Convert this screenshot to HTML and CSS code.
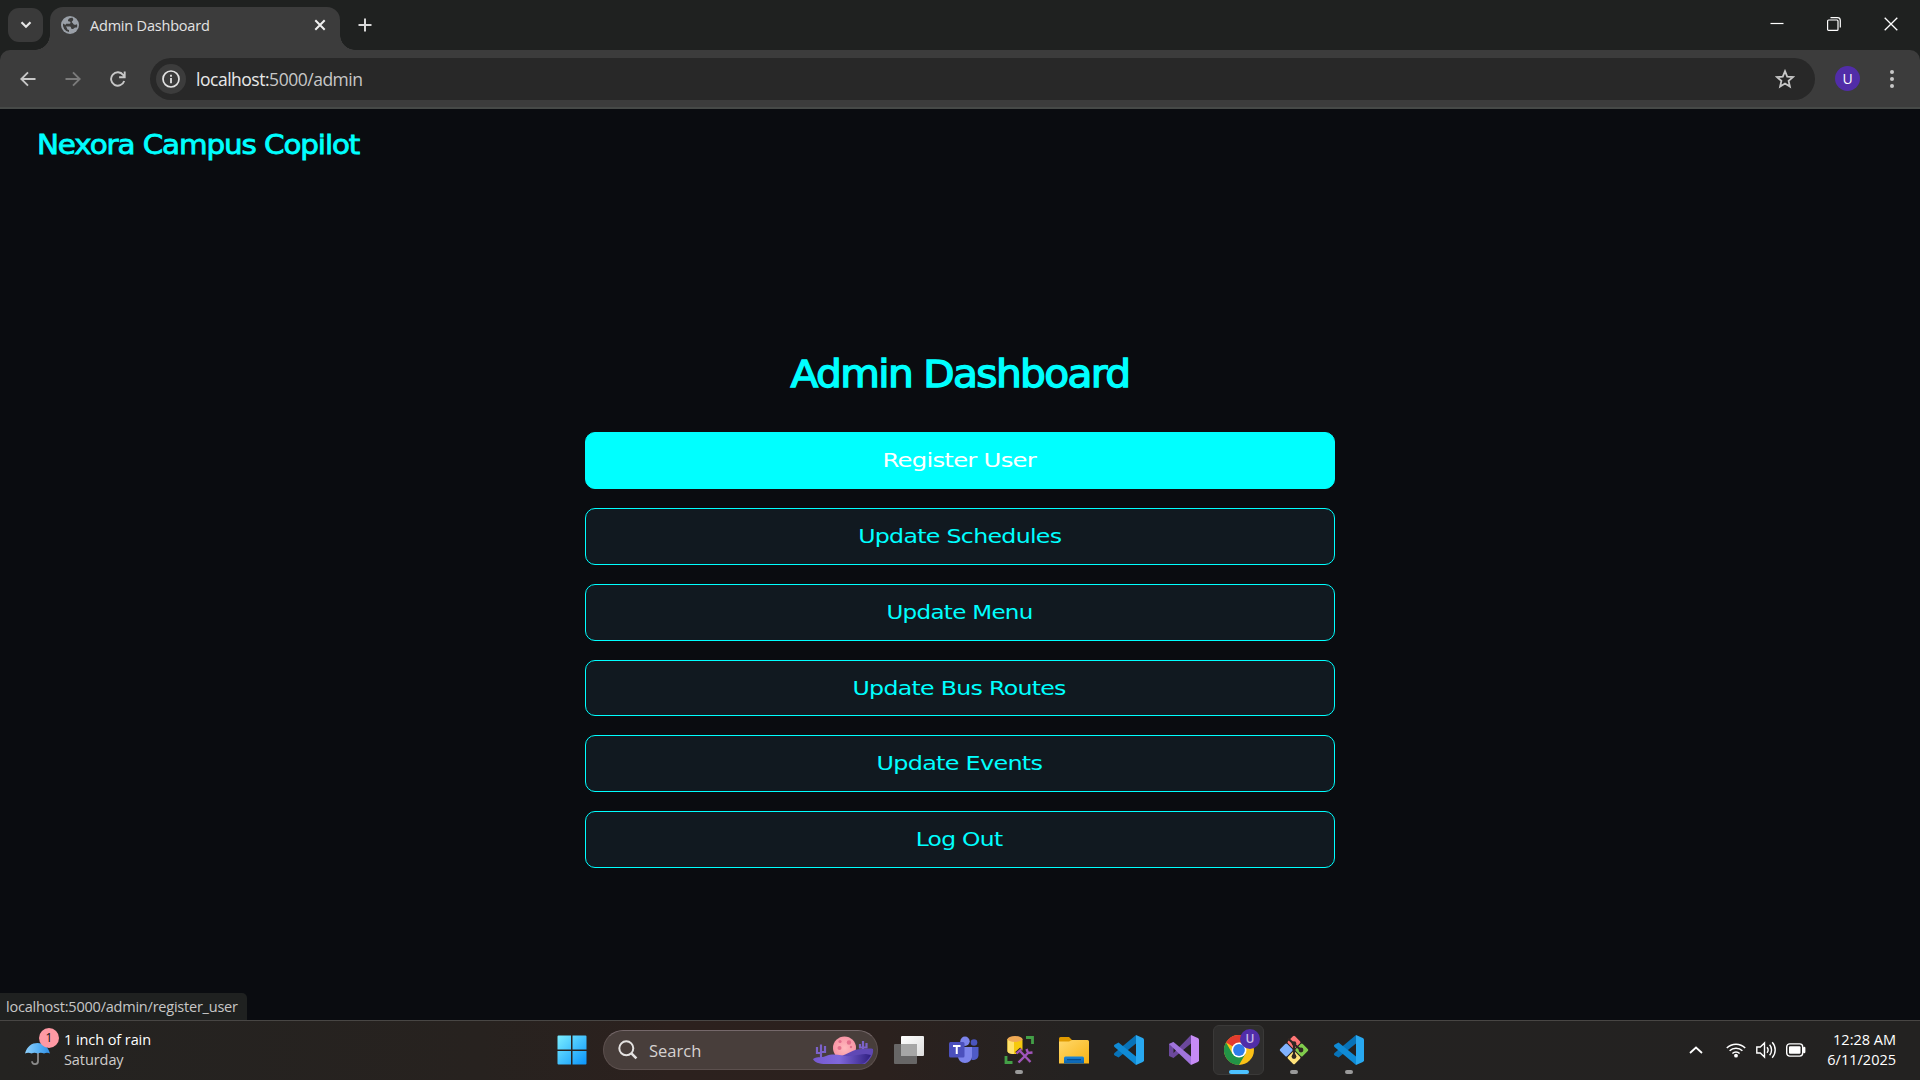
FILE: index.html
```html
<!DOCTYPE html>
<html lang="en">
<head>
<meta charset="utf-8">
<title>Admin Dashboard</title>
<link rel="stylesheet" href="styles.css">
</head>
<body>
<div class="screen">
  <div class="tabstrip">
    <button class="tab-search"><svg width="12" height="8" viewBox="0 0 12 8"><path d="M1.500 1.200 6 5.700 10.500 1.200" fill="none" stroke="#e6e6e6" stroke-width="2.200"/></svg></button>
    <div class="tab">
      <svg width="18" height="18" viewBox="0 0 18 18"><circle cx="9" cy="9" r="9" fill="#9aa0a8"/><path d="M11.500 1.800C9.500 1.600 8 2.500 7.300 3.500c-.6 1-.2 2 .8 2 .9 0 1.400.3 1.400 1.200 0 .8-.6 1.100-1.500 1.100H5.800c-.8 0-1.200.5-1.200 1.200L2 7.500A7.200 7.200 0 0 0 8 16v-2c-1.500 0-2-1-2-2l-1.200-1.500H8c1.500 0 2 .4 2 1.200s.7 1.300 1.700 1.300c1.300 0 1.300-1.500 2.800-1.500H16A7.200 7.200 0 0 0 16 8c-.8.9-2 1.100-3 .6-.9-.5-.7-1.500-1.600-1.900-.8-.4-.8-1.400 0-1.800.9-.5 1.300-1.200.1-3.100z" fill="#3c3c3c" fill-rule="evenodd"/></svg>
      <span class="tab-title">Admin Dashboard</span>
      <svg class="tab-close" width="12" height="12" viewBox="0 0 12 12"><path d="m1.300 1.300 9.400 9.400m0-9.400-9.400 9.400" stroke="#f0f0f0" stroke-width="2"/></svg>
    </div>
    <svg class="new-tab" width="14" height="14" viewBox="0 0 14 14"><path d="M7 .5v13M.5 7h13" stroke="#d8d8d8" stroke-width="2"/></svg>
    <div class="window-controls">
      <svg width="14" height="14" viewBox="0 0 14 14"><path d="M.5 6.500h13" stroke="#fff" stroke-width="1.200"/></svg>
      <svg width="14" height="14" viewBox="0 0 14 14"><rect x=".6" y="3" width="10.400" height="10.400" rx="1" fill="none" stroke="#fff" stroke-width="1.200"/><path d="M3.500.7h7a2.800 2.800 0 0 1 2.800 2.800v7" fill="none" stroke="#fff" stroke-width="1.200"/></svg>
      <svg width="14" height="14" viewBox="0 0 14 14"><path d="m.7.7 12.600 12.600m0-12.600L.7 13.300" stroke="#fff" stroke-width="1.300"/></svg>
    </div>
  </div>

  <div class="toolbar">
    <div class="nav">
      <svg width="16" height="16" viewBox="0 0 16 16"><path d="M15.500 8H1.700M8 1.300 1.300 8 8 14.700" fill="none" stroke="#c7c7c7" stroke-width="1.900"/></svg>
      <svg width="16" height="16" viewBox="0 0 16 16"><path d="M.5 8h13.800M8 1.300 14.700 8 8 14.700" fill="none" stroke="#7b7b7b" stroke-width="1.900"/></svg>
      <svg width="16" height="16" viewBox="0 0 16 16"><path d="M14.200 10A6.700 6.700 0 1 1 13.200 4l1.300 1.800M14.700.6v5.600H9.100" fill="none" stroke="#c7c7c7" stroke-width="1.900"/></svg>
    </div>
    <div class="omnibox">
      <span class="site-info"><svg width="18" height="18" viewBox="0 0 18 18"><circle cx="9" cy="9" r="8" fill="none" stroke="#e3e3e3" stroke-width="1.700"/><path d="M9 8v5.200M9 4.800v1.900" stroke="#e3e3e3" stroke-width="1.800"/></svg></span>
      <span class="url"><b>localhost:</b>5000/admin</span>
      <svg class="star" width="20" height="20" viewBox="0 0 20 20"><path d="m10 2.200 2.200 5.400 5.800.5-4.400 3.800 1.300 5.700-4.900-3-4.900 3 1.300-5.700L2 8.100l5.800-.5z" fill="none" stroke="#c7c7c7" stroke-width="1.800"/></svg>
    </div>
    <span class="avatar">U</span>
    <svg class="menu-dots" width="4" height="18" viewBox="0 0 4 18"><g fill="#c7c7c7"><circle cx="2" cy="2.100" r="2"/><circle cx="2" cy="9" r="2"/><circle cx="2" cy="15.900" r="2"/></g></svg>
  </div>

  <div class="page">
    <header class="brand"><span class="stretch" style="--sx:1.087">Nexora Campus Copilot</span></header>
    <main class="dashboard">
      <h1 class="heading"><span class="stretch" style="--sx:1.1">Admin Dashboard</span></h1>
      <nav class="actions">
        <a class="action action-hover"><span class="stretch" style="--sx:1.215">Register User</span></a>
        <a class="action"><span class="stretch" style="--sx:1.185">Update Schedules</span></a>
        <a class="action"><span class="stretch" style="--sx:1.15">Update Menu</span></a>
        <a class="action"><span class="stretch" style="--sx:1.183">Update Bus Routes</span></a>
        <a class="action"><span class="stretch" style="--sx:1.195">Update Events</span></a>
        <a class="action"><span class="stretch" style="--sx:1.17">Log Out</span></a>
      </nav>
    </main>
    <div class="status">localhost:5000/admin/register_user</div>
  </div>

  <footer class="taskbar">
    <div class="weather">
      <div class="umbrella">
        <svg width="26" height="26" viewBox="0 0 26 26"><defs><linearGradient id="um"><stop offset="0" stop-color="#8fd0fb"/><stop offset=".5" stop-color="#5db4f5"/><stop offset="1" stop-color="#2f8fe6"/></linearGradient></defs><path d="M13 12v9a3 3 0 0 1-6 .3" fill="none" stroke="#8a8a8a" stroke-width="1.800"/><path d="M0 13.500C2 6 7 3 12.500 3S23 6 25 13.500c-2-.9-4-.9-6 0-2-.9-4.500-.9-6.500 0-2-.9-4-.9-6 0-2-.9-4.500-.9-6.500 0z" fill="url(#um)"/></svg>
        <span class="weather-badge">1</span>
      </div>
      <div class="weather-text"><span>1 inch of rain</span><span class="dim">Saturday</span></div>
    </div>

    <div class="apps">
      <div class="app app-start"><svg width="30" height="30" viewBox="0 0 30 30"><defs><linearGradient id="wi" x2="1" y2="1"><stop offset="0" stop-color="#7beeff"/><stop offset="1" stop-color="#0a94fb"/></linearGradient></defs><path d="M1.500.5H14v14H.5v-13a1 1 0 0 1 1-1zM15.500.5h13a1 1 0 0 1 1 1v13h-14zM.5 16H14v13.500H1.500a1 1 0 0 1-1-1zM15.500 16h14v12.500a1 1 0 0 1-1 1h-13z" fill="url(#wi)"/></svg></div>
      <div class="search">
        <svg width="20" height="20" viewBox="0 0 20 20"><circle cx="8.300" cy="8.300" r="7" fill="none" stroke="#e4e2e1" stroke-width="2"/><path d="m13.400 13.400 5 5" stroke="#e4e2e1" stroke-width="2.600"/></svg>
        <span>Search</span>
        <svg class="scene" width="62" height="30" viewBox="0 0 62 30"><defs><linearGradient id="hill"><stop offset="0" stop-color="#7659cf"/><stop offset=".45" stop-color="#8068dc"/><stop offset="1" stop-color="#2f1f80"/></linearGradient><radialGradient id="moon"><stop offset="0" stop-color="#ffb9bd"/><stop offset="1" stop-color="#f895a6"/></radialGradient></defs><path d="M9 24V9.500M9 18H5v-6M9 17h4v-6M51 17V6M51 12.500h-3V9M51 12.500h3.500V8" fill="none" stroke="#7b62c9" stroke-width="2.200"/><circle cx="32.500" cy="13" r="11.500" fill="url(#moon)"/><g fill="#e36f8c"><circle cx="28" cy="6.500" r="1.600"/><circle cx="37" cy="7.500" r="2.200"/><circle cx="27.500" cy="13" r="2"/><circle cx="39" cy="12" r="1.200"/></g><path d="M27 22c9-3 14-8 23-8 5 0 8-1 11 0 1 5-3 11-8 15H30z" fill="#5f48b5"/><path d="M1 24c5-3 9-1 13-3 9-4 17 1 25 0 6-1 10-2 15-2l5 1c-2 4-6 9-10 9H14C7 29 2 27 1 24z" fill="url(#hill)"/></svg>
      </div>
      <div class="app"><svg width="30" height="30" viewBox="0 0 30 30"><defs><linearGradient id="tv" x2="1" y2="1"><stop offset="0" stop-color="#fff"/><stop offset="1" stop-color="#dcdcdc"/></linearGradient></defs><rect x="7" y="1" width="23" height="20" rx="1" fill="url(#tv)"/><rect y="9" width="23" height="20" rx="1" fill="#6e6e6e" opacity=".9"/><path d="M7 9h16v12H7z" fill="#a6a6a6"/></svg></div>
      <div class="app"><svg width="30" height="30" viewBox="0 0 30 30"><circle cx="25" cy="7.500" r="3.300" fill="#4a55bd"/><circle cx="16" cy="6.300" r="4.700" fill="#7b83eb"/><path d="M22 12h7.500v8c0 3.500-3 5.500-7 5z" fill="#4f5bc9"/><path d="M9 12h14v9c0 4-3 7-7 7s-7-3-7-7z" fill="#7b83eb"/><rect y="7" width="15.500" height="15.500" rx="1.500" fill="#4b50bd"/><path d="M4 11h7.500M7.750 11v8" stroke="#fff" stroke-width="2"/></svg></div>
      <div class="app"><svg width="30" height="30" viewBox="0 0 30 30"><path d="M22 2.500h6.500V9M2 21v6.500h6.500" fill="none" stroke="#43a047" stroke-width="2.800"/><path d="M3.500 4v12c0 2 3.500 3 7.500 3s7.500-1 7.500-3V4z" fill="#f6c90e"/><path d="M3.500 4v12c0 2 2 3 6.500 3V5z" fill="#ffe26b"/><ellipse cx="11" cy="4" rx="7.500" ry="3" fill="#efa955"/><path d="m15.500 15.500 11 11.500M25 17 14.500 27.500M12.500 18.500l5-4.500M22.500 14l1.500 4 4.500-.5" fill="none" stroke="#302723" stroke-width="4"/><path d="m15.500 15.500 11 11.500M25 17 14.500 27.500M12.500 18.500l5-4.500M22.500 14l1.500 4 4.500-.5" fill="none" stroke="#a055bd" stroke-width="2.300"/></svg><i class="running"></i></div>
      <div class="app"><svg width="30" height="30" viewBox="0 0 30 30"><defs><linearGradient id="fo" x2="1" y2="1"><stop offset="0" stop-color="#ffd86b"/><stop offset="1" stop-color="#f8b313"/></linearGradient><linearGradient id="fb" y2="1" x2="0"><stop offset="0" stop-color="#1c86d8"/><stop offset="1" stop-color="#0a62ae"/></linearGradient></defs><path d="M0 3.500A1.500 1.500 0 0 1 1.500 2H10l3 3v5H0z" fill="#e09a00"/><path d="M0 6.500h10L13 5h15.500A1.500 1.500 0 0 1 30 6.500v22H0z" fill="url(#fo)"/><path d="M5 28.500V23a1.500 1.500 0 0 1 1.500-1.500h17A1.500 1.500 0 0 1 25 23v5.500z" fill="url(#fb)"/><path d="M8 24.700h14" stroke="#064a8b" stroke-width="1.200"/></svg></div>
      <div class="app"><svg width="30" height="30" viewBox="0 0 30 30"><g id="code"><path d="M22 0v8.500L4.500 22.500.5 20.300c-.7-.7-.7-1.500 0-2.200z" fill="#0873b8"/><path d="M22 30v-8.500L4.500 7.500.5 9.700c-.7.7-.7 1.500 0 2.200z" fill="#108bd5"/><path d="M22 0l6.800 2.900a2 2 0 0 1 1.200 1.800v20.600a2 2 0 0 1-1.200 1.800L22 30z" fill="#28a8f0"/></g></svg></div>
      <div class="app"><svg width="30" height="30" viewBox="0 0 30 30"><path d="M22 0v8.500L4.500 23 0 21V9l4.500-2v11z" fill="#6b489c"/><path d="M0 9 4.500 7 22 21.500V30z" fill="#a074dc"/><path d="m22 0 6.800 2.900a2 2 0 0 1 1.200 1.800v20.600a2 2 0 0 1-1.200 1.800L22 30z" fill="#c68bf5"/></svg></div>
      <div class="app app-active"><svg width="30" height="30" viewBox="0 0 30 30"><circle cx="15" cy="15" r="15" fill="#fbc116"/><path d="M15 15 2 7.500A15 15 0 0 1 28 7.500H15z" fill="#e33b2e"/><path d="M2 7.500A15 15 0 0 0 15 30l6.500-11.250L15 15l-6.500 3.750z" fill="#229446"/><circle cx="15" cy="15" r="7.500" fill="#fff"/><circle cx="15" cy="15" r="5.900" fill="#2f7de9"/></svg><span class="profile-badge">U</span><i class="running"></i></div>
      <div class="app"><svg width="30" height="30" viewBox="0 0 30 30"><g transform="rotate(45 15 15)"><rect x="4.500" y="4.500" width="10" height="10" rx="1.500" fill="#ff7676"/><rect x="15.500" y="4.500" width="10" height="10" rx="1.500" fill="#80cc4d"/><rect x="4.500" y="15.500" width="10" height="10" rx="1.500" fill="#80b3ff"/><rect x="15.500" y="15.500" width="10" height="10" rx="1.500" fill="#ffe27a"/></g><path d="M9 3.500 15 9v13M15 9l7 6" fill="none" stroke="#302723" stroke-width="2.200"/><circle cx="15" cy="8.500" r="2.300" fill="#302723"/><circle cx="22" cy="15" r="2.400" fill="#302723"/><circle cx="15" cy="21.500" r="2.400" fill="#302723"/></svg><i class="running"></i></div>
      <div class="app"><svg width="30" height="30" viewBox="0 0 30 30"><use href="#code"/></svg><i class="running"></i></div>
    </div>

    <div class="tray">
      <svg width="14" height="8" viewBox="0 0 14 8"><path d="m1 7 6-5.500L13 7" fill="none" stroke="#fff" stroke-width="1.800"/></svg>
      <div class="tray-icons">
        <svg width="20" height="16" viewBox="0 0 20 16"><path d="M.8 6a13 13 0 0 1 18.400 0M3.600 8.800a9 9 0 0 1 12.800 0M6.400 11.500a5.100 5.100 0 0 1 7.200 0" fill="none" stroke="#fff" stroke-width="1.500"/><circle cx="10" cy="13.700" r="1.900" fill="#fff"/></svg>
        <svg width="20" height="18" viewBox="0 0 20 18"><path d="M.8 6h3.500L8.500 2v14l-4.200-4H.8zM11 6.200c1.300 1.600 1.300 4 0 5.600M13.600 3.800c2.600 3 2.600 7.400 0 10.400M16.200 1.300c4 4.400 4 11 0 15.400" fill="none" stroke="#fff" stroke-width="1.400"/></svg>
        <svg width="20" height="14" viewBox="0 0 20 14"><rect x=".7" y=".9" width="16" height="12.200" rx="3" fill="none" stroke="#fff" stroke-width="1.400"/><rect x="3" y="3.200" width="11.500" height="7.600" rx="1" fill="#fff"/><path d="M18.200 5v4" stroke="#fff" stroke-width="2.400" stroke-linecap="round"/></svg>
      </div>
      <div class="clock"><span>12:28 AM</span><span>6/11/2025</span></div>
    </div>
  </footer>
</div>
</body>
</html>
```
FILE: styles.css
```css
* { box-sizing: border-box; }
body { margin: 0; background: #0a0c10; font-family: "Open Sans", "Noto Sans", sans-serif; font-size: 14px; color: #fff; }
svg { display: block; flex: none; }
.screen { width: 1920px; height: 1080px; display: flex; flex-direction: column; overflow: hidden; background: #1f2120; }

/* Browser frame */
.tabstrip { height: 50px; display: flex; align-items: flex-start; padding: 7px 0 0 8px; }
.tab-search { width: 35px; height: 34px; margin-top: 1px; padding: 0; border: 0; border-radius: 11px; background: #3a3a3a; display: flex; align-items: center; justify-content: center; }
.tab { position: relative; width: 290px; height: 43px; margin-left: 7px; padding: 0 14px 7px 11px; display: flex; align-items: center; background: #3c3c3c; border-radius: 13px 13px 0 0; }
.tab::before, .tab::after { content: ""; position: absolute; bottom: 0; width: 15px; height: 15px; }
.tab::before { left: -15px; background: radial-gradient(circle at 0 0, transparent 14.500px, #3c3c3c 15px); }
.tab::after { right: -15px; background: radial-gradient(circle at 100% 0, transparent 14.500px, #3c3c3c 15px); }
.tab-title { margin-left: 11px; font-size: 14.500px; color: #e3e3e3; letter-spacing: -.2px; }
.tab-close { margin-left: auto; }
.new-tab { margin: 11px 0 0 18px; }
.window-controls { margin-left: auto; display: flex; gap: 43px; padding: 10px 22px 0 0; }
.toolbar { height: 59px; display: flex; align-items: center; background: #3c3c3c; border-bottom: 2px solid #474a48; border-radius: 10px 10px 0 0; padding: 0 26px 0 20px; }
.nav { display: flex; gap: 29px; width: 130px; }
.omnibox { width: 1665px; height: 42px; border-radius: 21px; background: #282828; display: flex; align-items: center; padding: 0 20px 0 6px; }
.site-info { width: 30px; height: 30px; border-radius: 50%; background: #3c3c3c; display: flex; align-items: center; justify-content: center; }
.url { margin-left: 10px; padding-top: 1px; font-size: 17.500px; letter-spacing: -.48px; color: #c7c7c7; }
.url b { font-weight: 400; color: #e8e8e8; }
.star { margin-left: auto; }
.avatar { width: 25px; height: 25px; margin-left: 20px; border-radius: 50%; background: #512da8; display: flex; align-items: center; justify-content: center; font-size: 14px; }
.menu-dots { margin-left: auto; }

/* Dashboard page */
.page { position: relative; height: 911px; background: #0a0c10; font-family: "DejaVu Sans", sans-serif; color: #0ff; }
.stretch { display: inline-block; transform: scaleX(var(--sx)); white-space: nowrap; }
.brand { height: 70px; padding-left: 37px; font-size: 27px; line-height: 71px; letter-spacing: -1px; -webkit-text-stroke: .8px #0ff; }
.brand .stretch { transform-origin: left; }
.dashboard { width: 750px; margin: 171px auto 0; }
.heading { margin: 0; height: 82px; font-size: 37px; font-weight: 400; line-height: 50px; letter-spacing: -1.500px; text-align: center; -webkit-text-stroke: 1.300px #0ff; }
.actions { display: flex; flex-direction: column; gap: 19px; }
.action { height: 56.860px; border: 1px solid #0ff; border-radius: 10px; background: #111920; font-size: 20px; line-height: 55.500px; letter-spacing: -.6px; text-align: center; padding-right: 1px; }
.action-hover { background: #0ff; color: #fff; }
.status { position: absolute; left: 0; bottom: 0; height: 27px; width: 247px; padding-left: 6px; border-radius: 0 5px 0 0; background: #1f2120; color: #c7c7c7; font: 14.500px/27px "Open Sans", sans-serif; letter-spacing: -.22px; }

/* Taskbar */
.taskbar { height: 60px; display: grid; grid-template-columns: 1fr auto 1fr; align-items: center; padding-bottom: 1px; border-top: 1px solid #484644; background: linear-gradient(90deg, #242321 0, #27221f 25%, #2c211e 35%, #2b211e 46%, #242221 56%, #232221 100%); }
.weather { display: flex; padding-left: 25px; }
.umbrella { position: relative; width: 39px; padding-top: 10px; }
.weather-badge { position: absolute; left: 14px; top: -2px; width: 20px; height: 20px; border-radius: 50%; background: #ff99a4; color: #111; font-size: 12px; line-height: 20px; text-align: center; }
.weather-text, .clock { display: flex; flex-direction: column; font-size: 14.500px; line-height: 20px; letter-spacing: -.08px; }
.dim { color: #cfcdcc; }
.apps { display: flex; align-items: center; padding-left: 2px; }
.app { position: relative; width: 55px; height: 50px; display: flex; align-items: center; justify-content: center; }
.app-start { padding-right: 3px; }
.app-active { width: 51px; margin: 0 2px; border: 1px solid #3a3938; border-radius: 6px; background: #2f2e2d; }
.running { position: absolute; bottom: 1px; left: calc(50% - 4px); width: 8px; height: 4px; border-radius: 2px; background: #9a9a9a; }
.app-active .running { bottom: 0; left: calc(50% - 10px); width: 20px; background: #4cc2ff; }
.profile-badge { position: absolute; right: 3px; top: 3px; width: 20px; height: 20px; border-radius: 50%; background: #512da8; color: #c9bce8; font-size: 12px; font-weight: 600; line-height: 20px; text-align: center; }
.search { width: 275px; height: 40px; margin: 0 3px 0 2px; padding: 0 3px 0 14px; display: flex; align-items: center; border: 1px solid #5c504e; border-top-color: #75686a; border-radius: 20px; background: #483e3b; color: #d6d2d1; font-size: 16.500px; }
.search span { margin-left: 11px; }
.scene { margin-left: auto; }
.tray { display: flex; align-items: center; justify-content: flex-end; padding-right: 24px; }
.tray-icons { display: flex; align-items: center; gap: 10px; margin-left: 23px; }
.clock { width: 90px; text-align: right; letter-spacing: 0; }
```
